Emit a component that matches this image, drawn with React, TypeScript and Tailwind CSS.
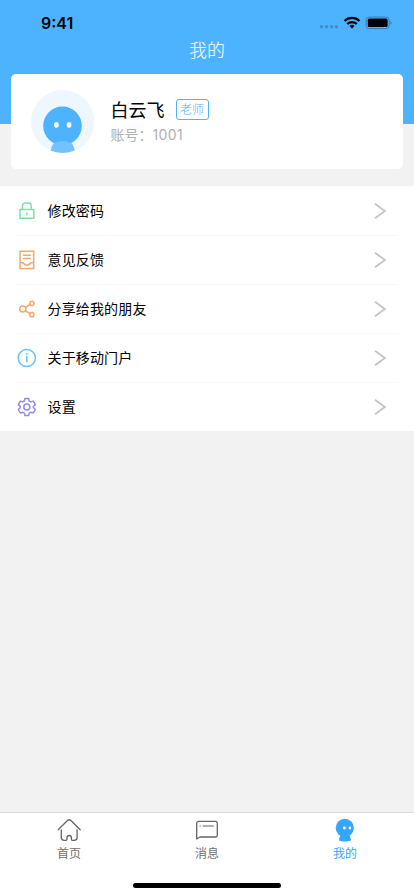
import type { ReactNode } from "react";

interface MenuItem {
  label: string;
  icon: ReactNode;
}

function LockIcon() {
  return (
    <svg width="20" height="20" viewBox="0 0 20 20" fill="none" stroke="#7fe0aa" strokeWidth="1.5">
      <path d="M3 8.5h13.8v8.8H3z" />
      <path d="M5.5 8.5V4.5a2.6 2.6 0 0 1 2.6-2.6h3.5a2.6 2.6 0 0 1 2.6 2.6v4" />
      <path d="M9.9 11.5v2.7" />
    </svg>
  );
}

function FeedbackIcon() {
  return (
    <svg width="20" height="20" viewBox="0 0 20 20" fill="none" stroke="#f9a56b" strokeWidth="1.5">
      <path d="M3 1.2h13.7v17.2H3z" />
      <path d="M6 5.3h7.8M6 8.5h7.8" />
      <path d="M3 12.8h2.8c.6 0 .8.3 1.1.8.4 1 1.5 1.6 3 1.6s2.6-.6 3-1.6c.3-.5.5-.8 1.1-.8h2.7" />
    </svg>
  );
}

function ShareIcon() {
  return (
    <svg width="20" height="20" viewBox="0 0 20 20" fill="none" stroke="#f9a56b" strokeWidth="1.5">
      <circle cx="5.8" cy="10" r="3.1" />
      <circle cx="14.9" cy="4.3" r="2.1" />
      <circle cx="14.9" cy="15.7" r="2.1" />
      <path d="M8.4 8.3l4.7-2.9M8.3 11.9l4.8 2.7" />
    </svg>
  );
}

function AboutIcon() {
  return (
    <svg width="20" height="20" viewBox="0 0 20 20" fill="none" stroke="#65c4fa" strokeWidth="1.5">
      <circle cx="9.8" cy="10" r="8.6" />
      <path d="M9.8 8v6.5M9.8 5.1v1.6" />
    </svg>
  );
}

function SettingsIcon() {
  return (
    <svg width="20" height="20" viewBox="0 0 20 20" fill="none" stroke="#8e8cf0" strokeWidth="1.5" strokeLinejoin="round">
      <path d="M8 1.5h3.6l.7 2.5 1.5.9 2.5-.8 2 3.5-1.9 1.7v1.5l1.9 1.7-2 3.5-2.5-.8-1.5.9-.7 2.5H8l-.7-2.5-1.5-.9-2.5.8-2-3.5 1.9-1.7V9.3L1.3 7.6l2-3.5 2.5.8L7.3 4z" />
      <circle cx="9.8" cy="10" r="3" />
    </svg>
  );
}

function Avatar() {
  return (
    <svg width="64" height="64" viewBox="0 0 64 64">
      <defs>
        <clipPath id="avatar-circle">
          <circle cx="31.7" cy="31.3" r="31.7" />
        </clipPath>
      </defs>
      <circle cx="31.7" cy="31.7" r="31.7" fill="#eef7ff" />
      <g clipPath="url(#avatar-circle)">
        <circle cx="31.5" cy="35.8" r="19.3" fill="#4eb3ff" />
        <path d="M19.7 64c0-5 1-8.500 3.400-11.200 5-2.200 12-2.200 17 0C42.600 55.500 43.900 59 43.900 64z" fill="#73c2ff" />
      </g>
      <ellipse cx="25.4" cy="34.8" rx="2.4" ry="2.9" fill="#fff" />
      <ellipse cx="38.1" cy="34.8" rx="2.4" ry="2.9" fill="#fff" />
    </svg>
  );
}

function StatusBar() {
  return (
    <div className="flex h-[37px] items-start justify-between pl-[41px] pr-[22px] pt-[13px]">
      <span className="font-[Inter] text-[16px] font-semibold leading-5 text-black">9:41</span>
      <div className="flex items-center pt-[3px]">
        <svg width="20" height="14" viewBox="0 0 20 14" fill="#3f8fcc">
          <circle cx="3.5" cy="10.8" r="1.8" />
          <circle cx="8.5" cy="10.8" r="1.8" />
          <circle cx="13.5" cy="10.8" r="1.8" />
          <circle cx="18.5" cy="10.8" r="1.8" />
        </svg>
        <svg className="ml-[5px]" width="18" height="14" viewBox="0 0 18 14" fill="none" stroke="#000" strokeWidth="2.3">
          <path d="M1.5 5a10.7 10.7 0 0 1 15 0" />
          <path d="M4.2 8a6.9 6.9 0 0 1 9.6 0" />
          <path d="M9 12.5L6.5 10a3.6 3.6 0 0 1 5 0z" fill="#000" stroke="none" />
        </svg>
        <svg className="ml-1" width="27" height="14" viewBox="0 0 27 14">
          <rect x="1.2" y="1" width="23" height="11.6" rx="3.3" fill="none" stroke="#347db5" />
          <rect x="2.8" y="2.6" width="19.8" height="8.4" rx="1.6" />
          <path d="M25.3 5c1.7.5 1.7 3.1 0 3.6z" fill="#347db5" />
        </svg>
      </div>
    </div>
  );
}

function HomeIcon() {
  return (
    <svg width="26" height="24" viewBox="0 0 26 24" fill="none" stroke="#666" strokeWidth="1.3" strokeLinecap="round" strokeLinejoin="round">
      <path d="M2.2 11.8L11.5 2.5q1.7-1.5 3.4 0L24.2 11.8" />
      <path d="M5.300 12v7.500a2.800 2.800 0 0 0 2.800 2.800h1.800q1.100 0 1.100-1.100v-1.500a2.200 2.200 0 0 1 4.400 0v1.500q0 1.100 1.100 1.100H18.300a2.800 2.800 0 0 0 2.800-2.800V12" />
    </svg>
  );
}

function MessageIcon() {
  return (
    <svg width="26" height="24" viewBox="0 0 26 24" fill="none" stroke="#666" strokeWidth="1.3" strokeLinejoin="round">
      <path d="M2.7 21V5.300a2 2 0 0 1 2-2h16.600a2 2 0 0 1 2 2v11.700a2 2 0 0 1-2 2H6z" />
      <path d="M5.500 8h1.300M8.500 8h11.300" strokeWidth="1.1" />
    </svg>
  );
}

function MineIcon() {
  return (
    <svg width="26" height="24" viewBox="0 0 26 24" fill="#34a6fd">
      <circle cx="12.8" cy="9.9" r="9.1" />
      <path d="M8.600 16h8.800c0 2.200 1.500 2.800 1.500 6.500-3 1.300-8.800 1.300-11.800 0 0-3.700 1.500-4.300 1.500-6.500z" />
      <circle cx="12.4" cy="10" r="1.4" fill="#fff" />
      <circle cx="17.9" cy="10" r="1.4" fill="#fff" />
    </svg>
  );
}

const menuItems: MenuItem[] = [
  { label: "修改密码", icon: <LockIcon /> },
  { label: "意见反馈", icon: <FeedbackIcon /> },
  { label: "分享给我的朋友", icon: <ShareIcon /> },
  { label: "关于移动门户", icon: <AboutIcon /> },
  { label: "设置", icon: <SettingsIcon /> },
];

const tabs = [
  { label: "首页", icon: <HomeIcon />, active: false },
  { label: "消息", icon: <MessageIcon />, active: false },
  { label: "我的", icon: <MineIcon />, active: true },
];

export default function App() {
  return (
    <div className="flex h-[896px] w-[414px] flex-col overflow-hidden bg-[#f2f2f2] font-['Noto_Sans_CJK_SC',sans-serif]">
      <header className="h-[124px] shrink-0 bg-[#4eb3ff]">
        <StatusBar />
        <h1 className="text-center text-[18px] font-light leading-6 text-white">我的</h1>
      </header>

      <section className="mx-[11px] -mt-[50px] flex h-[95px] shrink-0 items-center rounded-[5px] bg-white pl-5">
        <Avatar />
        <div className="ml-[15.5px]">
          <div className="flex items-center">
            <span className="text-[18px] leading-[23px] text-black">白云飞</span>
            <span className="ml-[11px] flex h-[21px] w-[33px] items-center justify-center rounded-[3px] border border-[#4eb3ff] pb-px text-[12px] font-light text-[#4eb3ff]">
              老师
            </span>
          </div>
          <p className="mt-[3px] text-[14px] leading-5 text-[#b0b0b0]">
            账号：<span className="font-[Inter] tracking-[0.4px]">1001</span>
          </p>
        </div>
      </section>

      <ul className="mt-[17px] h-[245px] shrink-0 bg-white pt-px">
        {menuItems.map((item, i) => (
          <li key={item.label} className="px-4">
            <div
              className={
                i < menuItems.length - 1
                  ? "flex h-[49px] items-center border-b border-[#f8f8f8] pb-px"
                  : "flex h-12 items-center pb-px"
              }
            >
              <span className="ml-px">{item.icon}</span>
              <span className="-mt-px ml-[10.5px] flex-1 text-[14px] tracking-[0.15px] text-black">{item.label}</span>
              <svg className="mr-[11px]" width="14" height="18" viewBox="0 0 14 18" fill="none" stroke="#c4c4c4" strokeWidth="1.8">
                <path d="M2 1.7l9.900 7.300L2 16.300" />
              </svg>
            </div>
          </li>
        ))}
      </ul>

      <nav className="mt-auto flex h-[84px] shrink-0 flex-col border-t border-[#d9d9d9] bg-white">
        <div className="grid grid-cols-3">
          {tabs.map((tab) => (
            <button key={tab.label} className="flex flex-col items-center pt-[5px]">
              {tab.icon}
              <span
                className={
                  tab.active
                    ? "mt-[3px] text-[12px] leading-4 text-[#34a6fd]"
                    : "mt-[3px] text-[12px] leading-4 text-[#707070]"
                }
              >
                {tab.label}
              </span>
            </button>
          ))}
        </div>
        <div className="mx-auto mb-[8px] mt-auto h-[5px] w-[148px] rounded-full bg-black" />
      </nav>
    </div>
  );
}
